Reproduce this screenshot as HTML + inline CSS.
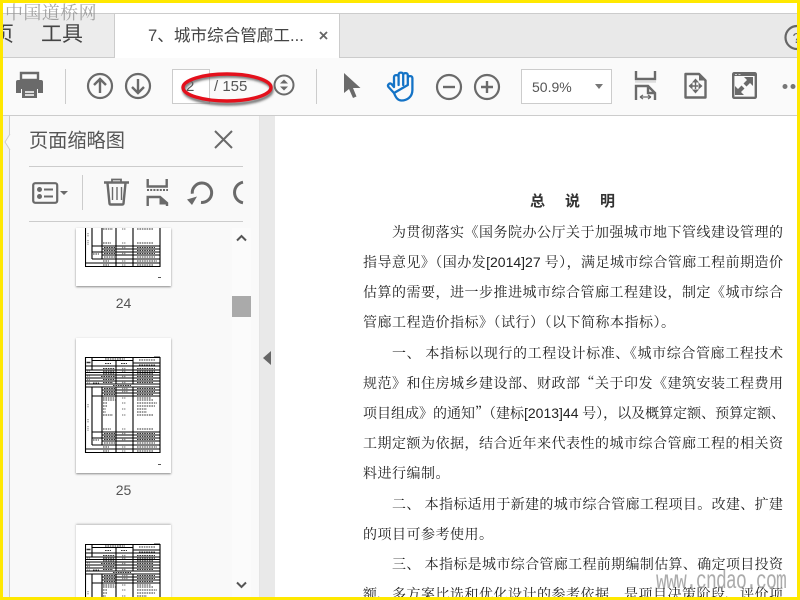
<!DOCTYPE html>
<html><head><meta charset="utf-8">
<style>
*{box-sizing:border-box}
html,body{margin:0;padding:0;width:800px;height:600px;overflow:hidden;background:#fff}
body{font-family:"Liberation Sans","Noto Sans CJK SC",sans-serif}
#w{position:absolute;left:0;top:0;width:800px;height:600px;overflow:hidden;contain:paint}
.a{position:absolute}
.l{position:absolute;left:363px;width:420px;height:24px;line-height:24px;font-family:"Noto Serif CJK SC",serif;font-size:14px;color:#222;text-align:justify;text-align-last:justify;white-space:nowrap;overflow:hidden}
.l b{font-weight:400;font-family:"Liberation Sans",sans-serif}
.n{text-align-last:left}
.i{padding-left:29px}
.sep{position:absolute;width:1px;background:#ccc}
svg{position:absolute;overflow:visible}
svg.c{overflow:hidden}
</style></head><body><div id="w">
<!-- shared thumbnail table -->
<svg width="0" height="0" style="left:0;top:0"><defs>
<filter id="b" x="-5%" y="-5%" width="110%" height="110%"><feGaussianBlur stdDeviation="0.3"/></filter>
<g id="ta" filter="url(#b)">
<g fill="none" stroke="#000" stroke-width="1.1">
<path d="M.5 53V.5H75V53"/>
<path d="M.5 9H75M.5 13H75M.5 15.500H75M.5 18H75M.5 21H75M.5 24H75M.5 27H75M.5 30H75"/>
<path d="M7 3.500H48M48 6H75M17 33H75M17 36H75M7 39H75"/>
<path d="M7 .5V13M31 3.500V27M48 .5V27M7 30V53M17 30V53M31 30V53M48 30V53"/>
</g>
<g fill="none" stroke="#333" stroke-width="1" stroke-dasharray="1.600 .8">
<path d="M20 2H40M20 6.500H26M36 6.500H42M54 3H70M54 8H70"/>
<path d="M18 11.500H30M18 14.300H30M18 16.800H30M16 19.500H30M18 22.500H30M18 25.500H28"/>
<path d="M52 11.500H70M52 14.300H70M52 16.800H68M52 19.500H68M52 22.500H68M52 25.500H68"/>
<path d="M28 28.500H46M19 31.500H30M19 34.500H30M19 37.500H30M52 31.500H70M52 34.500H70M52 37.500H68"/>
<path d="M18 41H30M18 43H32M18 46H22M18 49H22M18 52H21"/>
<path d="M52 41H66M52 43H68M52 46H72M52 49H70M52 52H62"/>
<path d="M8 26H14"/>
</g>
<g fill="none" stroke="#888" stroke-width="1.200" stroke-dasharray="1.300 .8">
<path d="M37 11.500H41M37 14.300H41M37 19.500H41M37 25.500H41M37 31.500H43M37 34.500H43M37 41H41M37 46H41M37 52H41M2 14H5M2 19H5M2 22.500H5M2 26H5"/>
<path d="M3 47V51M35 1V2"/>
</g>
<path d="M1.500 5.500H5.500" stroke="#333" stroke-width="1.500"/>
</g>
<g id="tb" filter="url(#b)">
<g fill="none" stroke="#000" stroke-width="1.1">
<path d="M.5 53V95.500H75V53"/>
<path d="M7 75H75M17 78H75M7 81H75M17 84H75M7 88H75M.5 92H75"/>
<path d="M7 53V88M17 53V88M31 53V95.500M48 53V95.500"/>
</g>
<g fill="none" stroke="#333" stroke-width="1" stroke-dasharray="1.600 .8">
<path d="M18 55H21M18 58H28M52 55H62M52 58H68"/>
<path d="M18 72H26M52 72H68M19 76.500H30M19 79.500H30M19 82.500H30M19 86H30M52 76.500H70M52 79.500H70M52 82.500H70M52 86H70M18 90H24M52 90H72M18 94H24M52 94H68M8 83H14"/>
</g>
<g fill="none" stroke="#888" stroke-width="1.200" stroke-dasharray="1.300 .8">
<path d="M37 58H41M37 72H41M37 76.500H41M37 82.500H41M37 90H41M37 94H41"/>
<path d="M3 62V66M3 69V74"/>
</g>
</g></defs></svg>
<!-- tab bar -->
<div class="a" style="left:0;top:13px;width:800px;height:45px;background:#e9e9e9;border-top:1px solid #ccc;border-bottom:1px solid #ccc"></div>
<div class="a" style="left:0;top:14px;width:115px;height:44px;background:#ececec;border-right:1px solid #ccc;border-bottom:1px solid #ccc"></div>
<div class="a" style="left:115px;top:14px;width:225px;height:45px;background:#fff;border-right:1px solid #ccc"></div>
<div class="a" style="left:-7px;top:22px;font-size:21px;line-height:26px;color:#444;width:21px;overflow:hidden">页</div>
<div class="a" style="left:41px;top:22px;font-size:21px;line-height:26px;color:#444">工具</div>
<div class="a" style="left:148px;top:25px;font-size:16.6px;line-height:22px;color:#444;white-space:nowrap">7、城市综合管廊工...</div>
<svg style="left:319px;top:31px" width="9" height="9"><path d="M1 1L8 8M8 1L1 8" stroke="#666" stroke-width="1.800"/></svg>
<svg style="left:784px;top:25px" width="13" height="25"><circle cx="13" cy="12.500" r="11.500" fill="none" stroke="#666" stroke-width="2.200"/><text x="8.500" y="18" font-size="15" fill="#666" font-family="Liberation Sans">?</text></svg>
<!-- toolbar -->
<div class="a" style="left:0;top:58px;width:800px;height:58px;background:#fafafa;border-bottom:1px solid #ccc"></div>
<svg style="left:15px;top:72px" width="30" height="28"><path d="M6 1H23V8H6Z" fill="none" stroke="#6a6a6a" stroke-width="2.400"/><path d="M3 8H26a2 2 0 0 1 2 2V21H23V17H6V21H1V10a2 2 0 0 1 2-2Z" fill="#6a6a6a"/><path d="M7 17H22V26H7Z" fill="#6a6a6a"/><path d="M10 20H19M10 23H19" stroke="#fff" stroke-width="1.400"/></svg>
<div class="sep" style="left:65px;top:69px;height:35px"></div>
<svg style="left:86px;top:72px" width="28" height="28" fill="none" stroke="#6a6a6a" stroke-width="2.200"><circle cx="14" cy="14" r="12"/><path d="M14 21V7M8 13L14 7L20 13" stroke-width="2.400"/></svg>
<svg style="left:124px;top:72px" width="28" height="28" fill="none" stroke="#6a6a6a" stroke-width="2.200"><circle cx="14" cy="14" r="12"/><path d="M14 7V21M8 15L14 21L20 15" stroke-width="2.400"/></svg>
<div class="a" style="left:172px;top:69px;width:38px;height:35px;background:#fff;border:1px solid #ccc"></div>
<div class="a" style="left:186px;top:78px;font-size:15px;line-height:18px;color:#555">2</div>
<div class="a" style="left:209px;top:69px;width:1px;height:35px;background:#ccc"></div>
<div class="a" style="left:214px;top:78px;font-size:15px;line-height:18px;color:#555">/ 155</div>
<svg style="left:272px;top:73px" width="24" height="24"><circle cx="12" cy="12" r="9.500" fill="none" stroke="#6a6a6a" stroke-width="2"/><path d="M8 10.500L12 6.500L16 10.500ZM8 13.500L12 17.500L16 13.500Z" fill="#6a6a6a"/></svg>
<svg style="left:0;top:0" width="800" height="600"><defs><filter id="s" x="-20%" y="-40%" width="140%" height="200%"><feGaussianBlur stdDeviation="1.200"/></filter></defs>
<ellipse cx="228" cy="90" rx="44" ry="14" fill="none" stroke="#666" stroke-width="3" filter="url(#s)"/>
<ellipse cx="227" cy="87.500" rx="44" ry="13.500" fill="none" stroke="#e4101c" stroke-width="3.400"/></svg>
<div class="sep" style="left:316px;top:69px;height:35px"></div>
<svg style="left:344px;top:73px" width="17" height="25"><path d="M0 0V20L5 16L9 25L12.500 23.500L9 15H16.500Z" fill="#6a6a6a"/></svg>
<svg style="left:386px;top:71px" width="29" height="31" fill="none" stroke="#1473c6" stroke-width="2.300" stroke-linecap="round" stroke-linejoin="round"><path d="M8 22L2.500 16C1 14 3.500 11.500 5.500 13L8 16V6C8 3.500 12.600 3.500 12.600 6V14M12.600 14V3.500C12.600 1 17.200 1 17.200 3.500V14M17.200 14V4C17.200 1.500 21.800 1.500 21.800 4V14M21.800 14V7C21.800 4.500 26.400 4.500 26.400 7V19C26.400 26 21 29.500 15.500 29.500C12 29.500 10 27 8 22Z"/></svg>
<svg style="left:435px;top:73px" width="28" height="28" fill="none" stroke="#6a6a6a" stroke-width="2.200"><circle cx="14" cy="14" r="12"/><path d="M8 14H20" stroke-width="2.400"/></svg>
<svg style="left:473px;top:73px" width="28" height="28" fill="none" stroke="#6a6a6a" stroke-width="2.200"><circle cx="14" cy="14" r="12"/><path d="M8 14H20M14 8V20" stroke-width="2.400"/></svg>
<div class="a" style="left:521px;top:69px;width:91px;height:35px;background:#fff;border:1px solid #ccc"></div>
<div class="a" style="left:532px;top:78px;font-size:14px;line-height:18px;color:#555">50.9%</div>
<svg style="left:594px;top:83px" width="10" height="7"><path d="M1 1H9L5 6Z" fill="#777"/></svg>
<svg style="left:634px;top:71px" width="23" height="30" fill="none" stroke="#6a6a6a" stroke-width="2.400"><path d="M2 0V8H21V0"/><path d="M1 10.500H22" stroke="#ddd"/><path d="M2 29V15H14L21 22V29M14 15V22H21"/><path d="M6 26H17M6 26L9 24M6 26L9 28M17 26L14 24M17 26L14 28" stroke-width="1.200"/></svg>
<svg style="left:684px;top:72px" width="23" height="27"><path d="M1.500 2H15L21.500 8.500V25.500H1.500Z" fill="none" stroke="#6a6a6a" stroke-width="2.400" stroke-linejoin="round"/><path d="M15 2L21.500 8.500H15Z" fill="#6a6a6a"/><path d="M11.500 6.500L15 10.500H8ZM11.500 21.500L15 17.500H8ZM4.500 14L8.500 10.500V17.500ZM18.500 14L14.500 10.500V17.500ZM10.800 10H12.200V18H10.800ZM8 13.300H15V14.700H8Z" fill="#6a6a6a"/></svg>
<svg style="left:732px;top:72px" width="25" height="27"><rect x="1.200" y="1.200" width="22.600" height="24.600" rx="1" fill="none" stroke="#6a6a6a" stroke-width="2.400"/><path d="M1 1H24V4H1Z" fill="#6a6a6a"/><path d="M3 2.500H5M6.500 2.500H8.500" stroke="#ccc"/><path d="M12 5H21V14L18 11L14.500 14.500L11.500 11.500L15 8ZM3 23H12L9 20L12.500 16.500L9.500 13.500L6 17L3 14Z" fill="#6a6a6a"/></svg>
<svg style="left:781px;top:83px" width="16" height="7"><circle cx="4" cy="3.500" r="2.500" fill="#777"/><circle cx="12" cy="3.500" r="2.500" fill="#777"/></svg>
<!-- left panel -->
<div class="a" style="left:3px;top:116px;width:7px;height:484px;background:#f3f3f3"></div>
<div class="a" style="left:9px;top:116px;width:251px;height:484px;background:#f9f9f9;border-left:1px solid #ccc;border-right:1px solid #e4e4e4"></div>
<svg style="left:4px;top:134px" width="7" height="16"><path d="M6 0L1 8L6 16" fill="#f9f9f9" stroke="#ccc"/></svg>
<div class="a" style="left:260px;top:116px;width:15px;height:484px;background:#e9e9e9"></div>
<svg style="left:263px;top:351px" width="9" height="14"><path d="M8 0V14L0 7Z" fill="#666"/></svg>
<div class="a" style="left:29px;top:129px;font-size:19.200px;line-height:25px;color:#555;white-space:nowrap">页面缩略图</div>
<svg style="left:214px;top:130px" width="19" height="19"><path d="M1 1L18 18M18 1L1 18" stroke="#6a6a6a" stroke-width="2"/></svg>
<div class="a" style="left:29px;top:166px;width:214px;height:1px;background:#ccc"></div>
<div class="a" style="left:29px;top:221px;width:214px;height:1px;background:#ccc"></div>
<svg style="left:32px;top:182px" width="38" height="22"><rect x="1.200" y="1.200" width="24" height="19.600" rx="2" fill="none" stroke="#6a6a6a" stroke-width="2.200"/><circle cx="7.500" cy="7.500" r="2.500" fill="#6a6a6a"/><circle cx="7.500" cy="14.500" r="2.500" fill="#6a6a6a"/><path d="M12 7.500H21M12 14.500H21" stroke="#6a6a6a" stroke-width="2"/><path d="M28 9H36L32 13Z" fill="#6a6a6a"/></svg>
<div class="sep" style="left:82px;top:175px;height:35px"></div>
<svg style="left:103px;top:178px" width="27" height="28" fill="none" stroke="#6a6a6a"><path d="M1 4.500H26" stroke-width="2.400"/><path d="M9 4V1.500H18V4" stroke-width="1.800"/><path d="M4.500 5L6.500 25.500Q6.600 26.500 8 26.500H19Q20.400 26.500 20.500 25.500L22.500 5" stroke-width="2.400"/><path d="M10 9V22M14.500 9V22M19 9V22" stroke-width="1.400" transform="translate(-.5 0)"/></svg>
<svg style="left:146px;top:179px" width="23" height="27" fill="none" stroke="#6a6a6a" stroke-width="2.400"><path d="M1.700 0V7.500H20.700V0"/><path d="M1 11H22" stroke-dasharray="2 1.200" stroke-width="2"/><path d="M1.700 27V18H14L21 24V27"/><path d="M13.500 17.500L21.500 24.500V25.500H13.500Z" fill="#6a6a6a" stroke="none"/></svg>
<svg style="left:186px;top:180px" width="27" height="27" fill="none" stroke="#6a6a6a" stroke-width="3"><path d="M6.300 13.700A9.700 9.700 0 1 1 15 22.400"/><path d="M1 19.500L11 16.500L6 25Z" fill="#6a6a6a" stroke="none"/></svg>
<svg class="c" style="left:229px;top:180px" width="15" height="26" fill="none" stroke="#6a6a6a" stroke-width="3"><path d="M14 2.200A10.500 10.500 0 0 0 14 22.800"/></svg>
<!-- thumbnails -->
<div class="a" style="left:232px;top:228px;width:19px;height:372px;background:#fbfbfb"></div>
<svg style="left:236px;top:234px" width="11" height="8"><path d="M1 6.500L5.500 2L10 6.500" fill="none" stroke="#555" stroke-width="2"/></svg>
<div class="a" style="left:232px;top:296px;width:19px;height:21px;background:#aaa"></div>
<svg style="left:236px;top:581px" width="11" height="8"><path d="M1 1.500L5.500 6L10 1.500" fill="none" stroke="#555" stroke-width="2"/></svg>
<div class="a" style="left:76px;top:228px;width:95px;height:58px;background:#fff;box-shadow:0 1px 2px #888"></div>
<svg class="c" style="left:85px;top:228px" width="78" height="40"><use href="#ta" x="0" y="-57"/><use href="#tb" x="0" y="-57"/></svg>
<div class="a" style="left:158px;top:277px;width:3px;height:1px;background:#555"></div>
<div class="a" style="left:76px;top:294px;width:95px;text-align:center;font-size:14px;line-height:18px;color:#555">24</div>
<div class="a" style="left:76px;top:338px;width:95px;height:135px;background:#fff;box-shadow:0 1px 2px #888"></div>
<svg style="left:85px;top:357px" width="78" height="98"><use href="#ta"/><use href="#tb"/></svg>
<div class="a" style="left:154px;top:356px;width:6px;height:1px;background:#999"></div>
<div class="a" style="left:158px;top:464px;width:3px;height:1px;background:#555"></div>
<div class="a" style="left:76px;top:481px;width:95px;text-align:center;font-size:14px;line-height:18px;color:#555">25</div>
<div class="a" style="left:76px;top:525px;width:95px;height:75px;background:#fff;box-shadow:0 -1px 2px #bbb"></div>
<svg class="c" style="left:85px;top:544px" width="78" height="53"><use href="#ta"/></svg>
<div class="a" style="left:154px;top:543px;width:6px;height:1px;background:#999"></div>
<!-- document -->
<div class="a" style="left:275px;top:116px;width:522px;height:484px;background:#fff"></div>
<div class="a" style="left:530px;top:191px;font-family:'Noto Sans CJK SC',sans-serif;font-size:15px;font-weight:700;line-height:20px;color:#333;letter-spacing:20px;white-space:nowrap">总说明</div>
<div class="l i" style="top:220px">为贯彻落实《国务院办公厅关于加强城市地下管线建设管理的</div>
<div class="l" style="top:250px">指导意见》（国办发<b>[2014]27</b> 号），满足城市综合管廊工程前期造价</div>
<div class="l" style="top:280px">估算的需要，进一步推进城市综合管廊工程建设，制定《城市综合</div>
<div class="l n" style="top:310px;letter-spacing:.5px">管廊工程造价指标》（试行）（以下简称本指标）。</div>
<div class="l i" style="top:341px">一、 本指标以现行的工程设计标准、《城市综合管廊工程技术</div>
<div class="l" style="top:371px">规范》和住房城乡建设部、财政部“关于印发《建筑安装工程费用</div>
<div class="l" style="top:401px">项目组成》的通知”（建标<b>[2013]44</b> 号），以及概算定额、预算定额、</div>
<div class="l" style="top:431px">工期定额为依据，结合近年来代表性的城市综合管廊工程的相关资</div>
<div class="l n" style="top:461px;letter-spacing:.5px">料进行编制。</div>
<div class="l i" style="top:492px">二、 本指标适用于新建的城市综合管廊工程项目。改建、扩建</div>
<div class="l n" style="top:522px;letter-spacing:.5px">的项目可参考使用。</div>
<div class="l i" style="top:552px">三、 本指标是城市综合管廊工程前期编制估算、确定项目投资</div>
<div class="l" style="top:582px;height:18px">额、多方案比选和优化设计的参考依据，是项目决策阶段、评价项</div>
<!-- watermarks -->
<div class="a" style="left:5px;top:-1px;font-family:'Noto Serif CJK SC',serif;font-size:18px;line-height:26px;letter-spacing:.4px;color:#8f8f8f;white-space:nowrap;opacity:.8">中国道桥网</div>
<div class="a" style="left:656px;top:570px;font-family:'Liberation Mono',monospace;font-size:18px;line-height:24px;color:#8f8f8f;white-space:nowrap;letter-spacing:-.8px;transform:scaleY(1.450);transform-origin:left center;opacity:.75">www.cndao.com</div>
<!-- yellow frame -->
<div class="a" style="left:0;top:0;width:800px;height:3px;background:#ffe800"></div>
<div class="a" style="left:0;top:597px;width:800px;height:3px;background:#ffe800"></div>
<div class="a" style="left:0;top:0;width:3px;height:600px;background:#ffe800"></div>
<div class="a" style="left:797px;top:0;width:3px;height:600px;background:#ffe800"></div>
</div></body></html>
